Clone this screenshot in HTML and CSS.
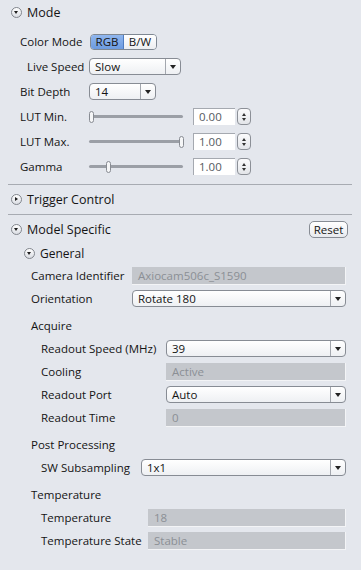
FILE: index.html
```html
<!DOCTYPE html>
<html lang="en">
<head>
  <meta charset="UTF-8">
  <title>Camera Settings</title>
  <link rel="stylesheet" href="styles.css">
</head>
<body>

  <div class="panel">

    <div class="group-head"><span class="toggle"></span>Mode</div>
    <div class="mode-grid">
      <label>Color Mode</label>
      <div class="seg"><span class="seg-on">RGB</span><span class="seg-off">B/W</span></div>

      <label class="indent">Live Speed</label>
      <div class="select w92"><span class="sel-text">Slow</span><span class="sel-arrow"></span></div>

      <label>Bit Depth</label>
      <div class="select w67"><span class="sel-text">14</span><span class="sel-arrow"></span></div>

      <label>LUT Min.</label>
      <div class="slider-row">
        <div class="slider"><div class="track"></div><div class="handle" style="left: 0px"></div></div>
        <div class="spin"><span class="spin-val">0.00</span><span class="spin-btn"><i class="up"></i><i class="down"></i></span></div>
      </div>

      <label>LUT Max.</label>
      <div class="slider-row">
        <div class="slider"><div class="track"></div><div class="handle" style="left: 90px"></div></div>
        <div class="spin"><span class="spin-val">1.00</span><span class="spin-btn"><i class="up"></i><i class="down"></i></span></div>
      </div>

      <label>Gamma</label>
      <div class="slider-row">
        <div class="slider"><div class="track"></div><div class="handle" style="left: 17px"></div></div>
        <div class="spin"><span class="spin-val">1.00</span><span class="spin-btn"><i class="up"></i><i class="down"></i></span></div>
      </div>
    </div>

    <div class="sep"></div>

    <div class="group-head trigger"><span class="toggle closed"></span>Trigger Control</div>

    <div class="sep"></div>

    <div class="group-head model"><span class="toggle"></span>Model Specific<button class="reset">Reset</button></div>
    <div class="sub-head"><span class="toggle"></span>General</div>

    <div class="model-body">
      <div class="row lv1 lw101">
        <label>Camera Identifier</label>
        <div class="field">Axiocam506c_S1590</div>
      </div>
      <div class="row lv1 lw101">
        <label>Orientation</label>
        <div class="select grow"><span class="sel-text">Rotate 180</span><span class="sel-arrow"></span></div>
      </div>

      <div class="row title">Acquire</div>
      <div class="row lv2 lw125">
        <label>Readout Speed (MHz)</label>
        <div class="select grow"><span class="sel-text">39</span><span class="sel-arrow"></span></div>
      </div>
      <div class="row lv2 lw125">
        <label>Cooling</label>
        <div class="field">Active</div>
      </div>
      <div class="row lv2 lw125">
        <label>Readout Port</label>
        <div class="select grow"><span class="sel-text">Auto</span><span class="sel-arrow"></span></div>
      </div>
      <div class="row lv2 lw125">
        <label>Readout Time</label>
        <div class="field">0</div>
      </div>

      <div class="row title">Post Processing</div>
      <div class="row lv2 lw100">
        <label>SW Subsampling</label>
        <div class="select grow"><span class="sel-text">1x1</span><span class="sel-arrow"></span></div>
      </div>

      <div class="row title">Temperature</div>
      <div class="row lv2 lw107">
        <label>Temperature</label>
        <div class="field">18</div>
      </div>
      <div class="row lv2 lw107">
        <label>Temperature State</label>
        <div class="field">Stable</div>
      </div>
    </div>

  </div>

</body>
</html>
```

FILE: styles.css
```css
* {
  box-sizing: border-box;
}

body {
  margin: 0;
  width: 361px;
  height: 570px;
  overflow: hidden;
  background: #e4e7ed;
  font-family: 'Open Sans', 'Segoe UI', sans-serif;
  font-size: 11.5px;
  color: #141414;
}

.panel {
  width: 345px;
  margin-left: 8px;
}

/* section headers */
.group-head {
  display: flex;
  align-items: center;
  height: 24px;
  padding-left: 3px;
  font-size: 12.5px;
}

.group-head.trigger {
  height: 29px;
}

.group-head.model {
  height: 28px;
}

.sub-head {
  display: flex;
  align-items: center;
  height: 20px;
  padding-left: 16px;
  font-size: 12px;
}

.toggle {
  position: relative;
  width: 11px;
  height: 11px;
  margin-right: 5px;
  border: 1px solid #82868d;
  border-radius: 50%;
  background: linear-gradient(#ffffff, #dadde3);
}

.toggle::after {
  content: "";
  position: absolute;
  left: 2px;
  top: 3px;
  border-left: 2.5px solid transparent;
  border-right: 2.5px solid transparent;
  border-top: 3px solid #1e1e1e;
}

.toggle.closed::after {
  left: 3px;
  top: 2px;
  border-top: 2.5px solid transparent;
  border-bottom: 2.5px solid transparent;
  border-left: 3px solid #1e1e1e;
  border-right: none;
}

.sep {
  height: 1px;
  margin-right: 1px;
  background: #a7abb2;
}

/* mode block */
.mode-grid {
  display: grid;
  grid-template-columns: 69px auto;
  grid-auto-rows: 25px;
  align-items: center;
  margin-top: 5px;
  margin-bottom: 5px;
  padding-left: 12px;
}

.mode-grid .indent {
  padding-left: 7px;
}

.seg {
  display: flex;
  width: 67px;
  height: 16px;
  margin-left: 1px;
  border: 1px solid #7f8893;
  border-radius: 4px;
  overflow: hidden;
  line-height: 14px;
}

.seg-on {
  width: 33px;
  text-align: center;
  background: linear-gradient(#8fb6ee, #6c9be0);
  border-right: 1px solid #4f7cc0;
}

.seg-off {
  flex: 1;
  text-align: center;
  background: linear-gradient(#ffffff, #eceef1);
}

.select {
  display: flex;
  height: 17px;
  border: 1px solid #878c94;
  border-radius: 4px;
  background: linear-gradient(#ffffff, #eef0f3);
  line-height: 15px;
}

.w92 {
  width: 92px;
}

.w67 {
  width: 67px;
}

.grow {
  flex: 1;
}

.sel-text {
  flex: 1;
  padding-left: 5px;
}

.sel-arrow {
  position: relative;
  width: 15px;
  border-left: 1px solid #a3a7ae;
}

.sel-arrow::after {
  content: "";
  position: absolute;
  left: 4px;
  top: 6px;
  border-left: 3px solid transparent;
  border-right: 3px solid transparent;
  border-top: 4px solid #222;
}

.slider-row {
  display: flex;
  align-items: center;
  gap: 10px;
}

.slider {
  position: relative;
  width: 94px;
  height: 14px;
}

.track {
  height: 3px;
  margin-top: 5px;
  border-radius: 2px;
  background: #9b9fa6;
}

.handle {
  position: absolute;
  top: 1px;
  width: 5px;
  height: 12px;
  border: 1px solid #888c93;
  border-radius: 3px;
  background: #f5f6f7;
}

.spin {
  display: flex;
  gap: 2px;
  height: 17px;
}

.spin-val {
  width: 42px;
  padding-left: 5px;
  border-top: 1px solid #a5a9b0;
  border-left: 1px solid #a5a9b0;
  background: #ffffff;
  color: #555a60;
  line-height: 15px;
}

.spin-btn {
  display: flex;
  flex-direction: column;
  align-items: center;
  justify-content: center;
  gap: 2px;
  width: 14px;
  border: 1px solid #8c9097;
  border-radius: 4px;
  background: linear-gradient(#fbfbfc, #e3e5e9);
}

.spin-btn .up {
  border-left: 2px solid transparent;
  border-right: 2px solid transparent;
  border-bottom: 3px solid #333;
}

.spin-btn .down {
  border-left: 2px solid transparent;
  border-right: 2px solid transparent;
  border-top: 3px solid #333;
}

.reset {
  margin-left: auto;
  margin-right: 5px;
  width: 39px;
  height: 17px;
  padding: 0;
  border: 1px solid #878c94;
  border-radius: 5px;
  background: linear-gradient(#ffffff, #e8eaee);
  font-family: inherit;
  font-size: 11.5px;
  color: #141414;
  line-height: 15px;
}

/* model specific rows */
.model-body {
  padding-top: 1px;
  padding-right: 7px;
}

.row {
  display: flex;
  align-items: center;
  height: 23px;
}

.row.title {
  margin-top: 4px;
  padding-left: 23px;
}

.lv1 {
  padding-left: 23px;
}

.lv2 {
  padding-left: 33px;
}

.lw101 label {
  width: 101px;
}

.lw125 label {
  width: 125px;
}

.lw100 label {
  width: 100px;
}

.lw107 label {
  width: 107px;
}

.field {
  flex: 1;
  height: 18px;
  padding-left: 6px;
  background: #c4c7cc;
  border-right: 1px solid #f3f4f6;
  border-bottom: 1px solid #f3f4f6;
  color: #8b8f95;
  line-height: 17px;
}
```
